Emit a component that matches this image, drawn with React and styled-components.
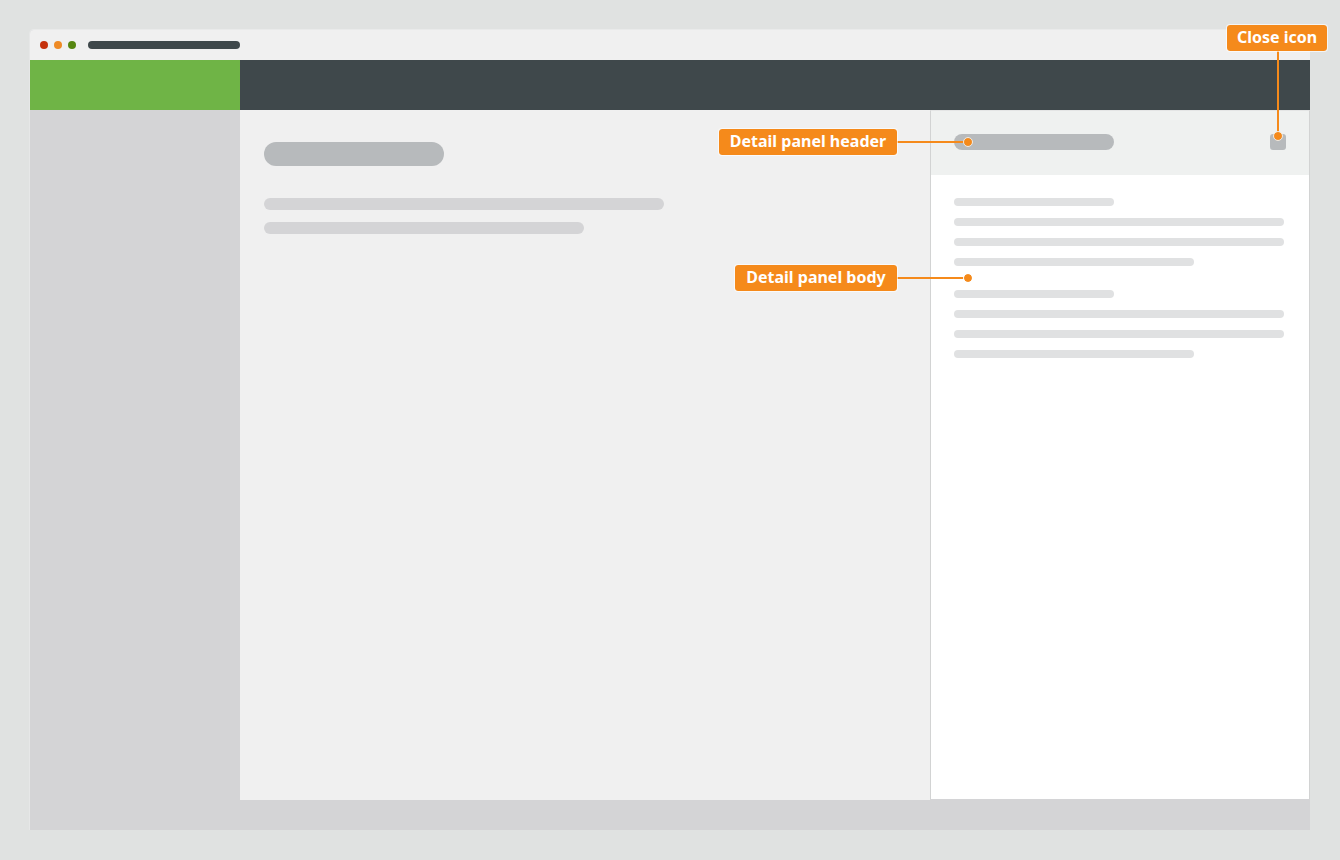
import styled, { createGlobalStyle } from 'styled-components';

const orange = '#f58a1b';

const GlobalStyle = createGlobalStyle`
  html, body {
    margin: 0;
    padding: 0;
    background: #e0e2e1;
  }
  body {
    font-family: "Noto Sans", "Open Sans", sans-serif;
  }
`;

const Page = styled.div`
  position: relative;
  width: 1340px;
  height: 860px;
  padding: 30px;
  box-sizing: border-box;
  overflow: hidden;
`;

const Window = styled.div`
  width: 1280px;
  height: 800px;
  display: flex;
  flex-direction: column;
  background: #d4d4d6;
  border-radius: 4px 4px 0 0;
  box-shadow: 0 -1px 0 #e9eaea, -1px 0 0 #e6e7e7;
`;

const TitleBar = styled.div`
  height: 30px;
  display: flex;
  align-items: center;
  padding-left: 10px;
  background: #f0f0f0;
  border-radius: 4px 4px 0 0;
`;

const Light = styled.span`
  width: 8px;
  height: 8px;
  margin-right: 6px;
  border-radius: 50%;
  background: ${({ color }) => color};
`;

const Address = styled.div`
  width: 152px;
  height: 8px;
  margin-left: 6px;
  border-radius: 4px;
  background: #3f484b;
`;

const NavBar = styled.div`
  height: 50px;
  display: flex;
  background: #3f484b;
`;

const Logo = styled.div`
  width: 210px;
  background: #6fb446;
`;

const Body = styled.div`
  flex: 1;
  display: flex;
  padding: 0 0 30px 210px;
  min-height: 0;
`;

const Main = styled.main`
  width: 690px;
  box-sizing: border-box;
  padding: 32px 24px;
  background: #f0f0f0;
`;

const Title = styled.div`
  width: 180px;
  height: 24px;
  margin-bottom: 32px;
  border-radius: 12px;
  background: #b7babc;
`;

const Line = styled.div`
  width: ${({ width }) => width}px;
  height: 12px;
  margin-bottom: 12px;
  border-radius: 6px;
  background: #d4d4d6;
`;

const Panel = styled.aside`
  width: 380px;
  height: 689px;
  box-sizing: border-box;
  display: flex;
  flex-direction: column;
  background: #fff;
  border-left: 1px solid #d2d3d3;
  border-right: 1px solid #d2d3d3;
  border-top: 1px solid #e4e5e5;
`;

const PanelHeader = styled.header`
  height: 64px;
  flex-shrink: 0;
  display: flex;
  align-items: center;
  justify-content: space-between;
  box-sizing: border-box;
  padding: 0 23px 2px;
  background: #eff1f0;
`;

const PanelTitle = styled.div`
  width: 160px;
  height: 16px;
  border-radius: 8px;
  background: #b7babc;
`;

const CloseIcon = styled.div`
  width: 16px;
  height: 16px;
  border-radius: 3px;
  background: #b7babc;
`;

const PanelBody = styled.div`
  padding: 23px 25px 0 23px;
`;

const TextGroup = styled.div`
  margin-bottom: 24px;
`;

const TextLine = styled.div`
  width: ${({ width }) => width}px;
  height: 8px;
  margin-bottom: 12px;
  border-radius: 4px;
  background: #e0e1e2;
`;

// annotations lie over the mock-up
const Callout = styled.div`
  position: absolute;
  left: ${({ x }) => x}px;
  top: ${({ y }) => y}px;
  width: ${({ width }) => width}px;
  height: 28px;
  box-sizing: border-box;
  padding-bottom: 2px;
  display: flex;
  align-items: center;
  justify-content: center;
  border-radius: 4px;
  border: 1px solid rgba(255, 255, 255, 0.65);
  background: ${orange};
  background-clip: padding-box;
  color: #fff;
  font-size: 16px;
  font-weight: 700;
  white-space: nowrap;
`;

const LeaderH = styled.div`
  position: absolute;
  left: 897px;
  top: ${({ y }) => y}px;
  width: 71px;
  height: 2px;
  background: ${orange};
`;

const LeaderV = styled.div`
  position: absolute;
  left: 1277px;
  top: 51px;
  width: 2px;
  height: 85px;
  background: ${orange};
`;

const Dot = styled.div`
  position: absolute;
  left: ${({ x }) => x - 5}px;
  top: ${({ y }) => y - 5}px;
  width: 10px;
  height: 10px;
  box-sizing: border-box;
  border-radius: 50%;
  border: 1px solid ${({ ring }) => ring};
  background: ${orange};
  background-clip: padding-box;
`;

const textBlock = [160, 330, 330, 240];

export default function App() {
  return (
    <Page>
      <GlobalStyle />
      <Window>
        <TitleBar>
          <Light color="#c5310c" />
          <Light color="#ee8a25" />
          <Light color="#568610" />
          <Address />
        </TitleBar>
        <NavBar>
          <Logo />
        </NavBar>
        <Body>
          <Main>
            <Title />
            <Line width={400} />
            <Line width={320} />
          </Main>
          <Panel>
            <PanelHeader>
              <PanelTitle />
              <CloseIcon />
            </PanelHeader>
            <PanelBody>
              {[0, 1].map((group) => (
                <TextGroup key={group}>
                  {textBlock.map((width, i) => (
                    <TextLine key={i} width={width} />
                  ))}
                </TextGroup>
              ))}
            </PanelBody>
          </Panel>
        </Body>
      </Window>

      <LeaderV />
      <Dot x={1278} y={136} ring="#f4e9da" />
      <Callout x={1226} y={24} width={102}>Close icon</Callout>

      <LeaderH y={141} />
      <Dot x={968} y={142} ring="#f4e9da" />
      <Callout x={718} y={128} width={180}>Detail panel header</Callout>

      <LeaderH y={277} />
      <Dot x={968} y={278} ring="#fff" />
      <Callout x={734} y={264} width={164}>Detail panel body</Callout>
    </Page>
  );
}
